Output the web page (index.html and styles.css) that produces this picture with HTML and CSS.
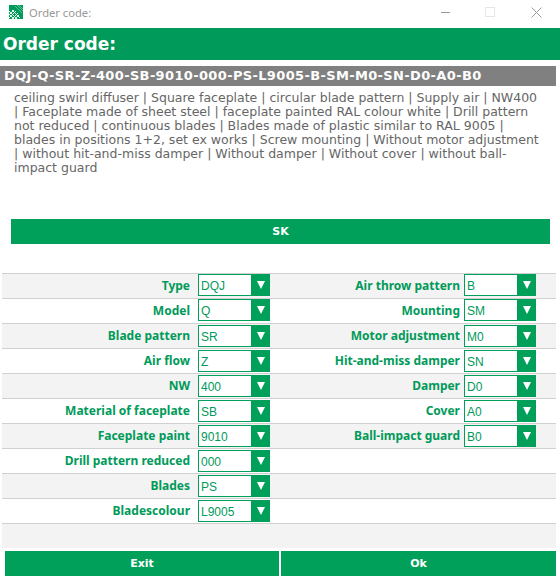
FILE: index.html
```html
<!doctype html>
<html>
<head>
    <title>Order code:</title>
    <link rel="stylesheet" href="styles.css">
</head>
<body>
    <div class="titlebar">
        <svg class="logo" width="14" height="14" viewBox="0 0 14 14">
            <rect width="14" height="14" fill="#009a5a"/>
            <path d="M6 1l7 7M8 0l6 6M10 0l4 4" stroke="#5cc095" stroke-width="1" fill="none"/>
            <path d="M0 6l8 8M0 9l5 5M3 5l8 8M0 10l5-5M0 13l7-7M3 14l6-6M6 14l4-4" stroke="#e4f5ec" stroke-width="1" fill="none"/>
        </svg>
        <span class="titlebar-text">Order code:</span>
        <div class="window-buttons">
            <svg width="11" height="11" viewBox="0 0 11 11"><path d="M2 5.5h9" stroke="#999"/></svg>
            <svg width="11" height="11" viewBox="0 0 11 11"><rect x="0.5" y="0.5" width="9" height="9" fill="none" stroke="#e6e6e6"/></svg>
            <svg width="11" height="11" viewBox="0 0 11 11"><path d="M0.5 0.5l10 10M10.5 0.5l-10 10" stroke="#999"/></svg>
        </div>
    </div>

    <h1 class="heading">Order code:</h1>
    <div class="code">DQJ-Q-SR-Z-400-SB-9010-000-PS-L9005-B-SM-M0-SN-D0-A0-B0</div>
    <p class="description">ceiling swirl diffuser | Square faceplate | circular blade pattern | Supply air | NW400<br>
    | Faceplate made of sheet steel | faceplate painted RAL colour white | Drill pattern<br>
    not reduced | continuous blades | Blades made of plastic similar to RAL 9005 |<br>
    blades in positions 1+2, set ex works | Screw mounting | Without motor adjustment<br>
    | without hit-and-miss damper | Without damper | Without cover | without ball-<br>
    impact guard</p>

    <div class="sk-wrap"><button class="btn">SK</button></div>

    <div class="options">
        <div class="row">
            <label class="field"><span>Type</span><span class="select">DQJ</span></label>
            <label class="field"><span>Air throw pattern</span><span class="select">B</span></label>
        </div>
        <div class="row">
            <label class="field"><span>Model</span><span class="select">Q</span></label>
            <label class="field"><span>Mounting</span><span class="select">SM</span></label>
        </div>
        <div class="row">
            <label class="field"><span>Blade pattern</span><span class="select">SR</span></label>
            <label class="field"><span>Motor adjustment</span><span class="select">M0</span></label>
        </div>
        <div class="row">
            <label class="field"><span>Air flow</span><span class="select">Z</span></label>
            <label class="field"><span>Hit-and-miss damper</span><span class="select">SN</span></label>
        </div>
        <div class="row">
            <label class="field"><span>NW</span><span class="select">400</span></label>
            <label class="field"><span>Damper</span><span class="select">D0</span></label>
        </div>
        <div class="row">
            <label class="field"><span>Material of faceplate</span><span class="select">SB</span></label>
            <label class="field"><span>Cover</span><span class="select">A0</span></label>
        </div>
        <div class="row">
            <label class="field"><span>Faceplate paint</span><span class="select">9010</span></label>
            <label class="field"><span>Ball-impact guard</span><span class="select">B0</span></label>
        </div>
        <div class="row">
            <label class="field"><span>Drill pattern reduced</span><span class="select">000</span></label>
        </div>
        <div class="row">
            <label class="field"><span>Blades</span><span class="select">PS</span></label>
        </div>
        <div class="row">
            <label class="field"><span>Bladescolour</span><span class="select">L9005</span></label>
        </div>
        <div class="row"></div>
    </div>

    <div class="footer">
        <button class="btn">Exit</button>
        <button class="btn">Ok</button>
    </div>
</body>
</html>
```
FILE: styles.css
```css
html, body {
    margin: 0;
    padding: 0;
    background: #fff;
}
body {
    width: 560px;
    height: 582px;
    overflow: hidden;
    font-family: "DejaVu Sans", Verdana, sans-serif;
}

/* Window chrome */
.titlebar {
    box-sizing: border-box;
    height: 28px;
    display: flex;
    align-items: center;
    padding: 0 0 4px 9px;
}
.logo {
    margin-right: 6px;
}
.titlebar-text {
    font-family: "Noto Sans", "Open Sans", sans-serif;
    font-size: 11.2px;
    color: #999;
}
.window-buttons {
    margin-left: auto;
    margin-right: 18px;
    display: flex;
    gap: 35px;
}

.heading {
    margin: 0;
    height: 32px;
    line-height: 32px;
    padding-left: 3px;
    background: #009a5a;
    color: #fff;
    font-size: 17px;
    font-weight: bold;
}
.code {
    margin: 6px 4px 0 0;
    height: 20px;
    line-height: 20px;
    padding-left: 4px;
    background: #808080;
    color: #fff;
    font-size: 13px;
    letter-spacing: 0.35px;
    font-weight: bold;
}
.description {
    margin: 5px 0 0 14px;
    height: 128px;
    font-size: 12.5px;
    line-height: 14px;
    color: #666;
}

.btn {
    display: block;
    border: 0;
    padding: 0;
    height: 25px;
    background: #00a05a;
    color: #fff;
    font-family: inherit;
    font-size: 11px;
    font-weight: bold;
}
.sk-wrap {
    padding: 0 10px 0 11px;
}
.sk-wrap .btn {
    width: 100%;
}

/* Option rows */
.options {
    margin: 29px 4px 0 2px;
}
.row {
    height: 24px;
    border-top: 1px solid #d0d0d0;
    display: grid;
    grid-template-columns: 268px 266px;
}
.row:nth-child(odd) {
    background: #f3f3f3;
}
.field {
    display: flex;
    justify-content: flex-end;
    align-items: center;
    gap: 8px;
    padding-bottom: 2px;
    font-family: "Noto Sans", "DejaVu Sans", sans-serif;
    font-size: 12px;
    font-weight: bold;
    color: #009a5a;
}
.field + .field {
    gap: 4px;
}
.select {
    position: relative;
    box-sizing: border-box;
    align-self: flex-start;
    width: 72px;
    height: 22px;
    line-height: 22px;
    padding-left: 2px;
    background: #fff;
    border: 1px solid #00a05a;
    font-family: "Liberation Sans", sans-serif;
    font-size: 12px;
    font-weight: normal;
}
.row:nth-child(n+3) .select {
    margin-top: 1px;
}
/* dropdown arrow */
.select::after {
    content: "";
    position: absolute;
    top: 0;
    right: 0;
    bottom: 0;
    width: 18px;
    background: #00a05a;
}
.select::before {
    content: "";
    position: absolute;
    z-index: 1;
    top: 6px;
    right: 4px;
    border-style: solid;
    border-width: 8px 4.5px 0 4.5px;
    border-color: #fff transparent transparent transparent;
}

.footer {
    margin: 3px 4px 0 5px;
    display: grid;
    grid-template-columns: 274px 275px;
    gap: 2px;
}
```
